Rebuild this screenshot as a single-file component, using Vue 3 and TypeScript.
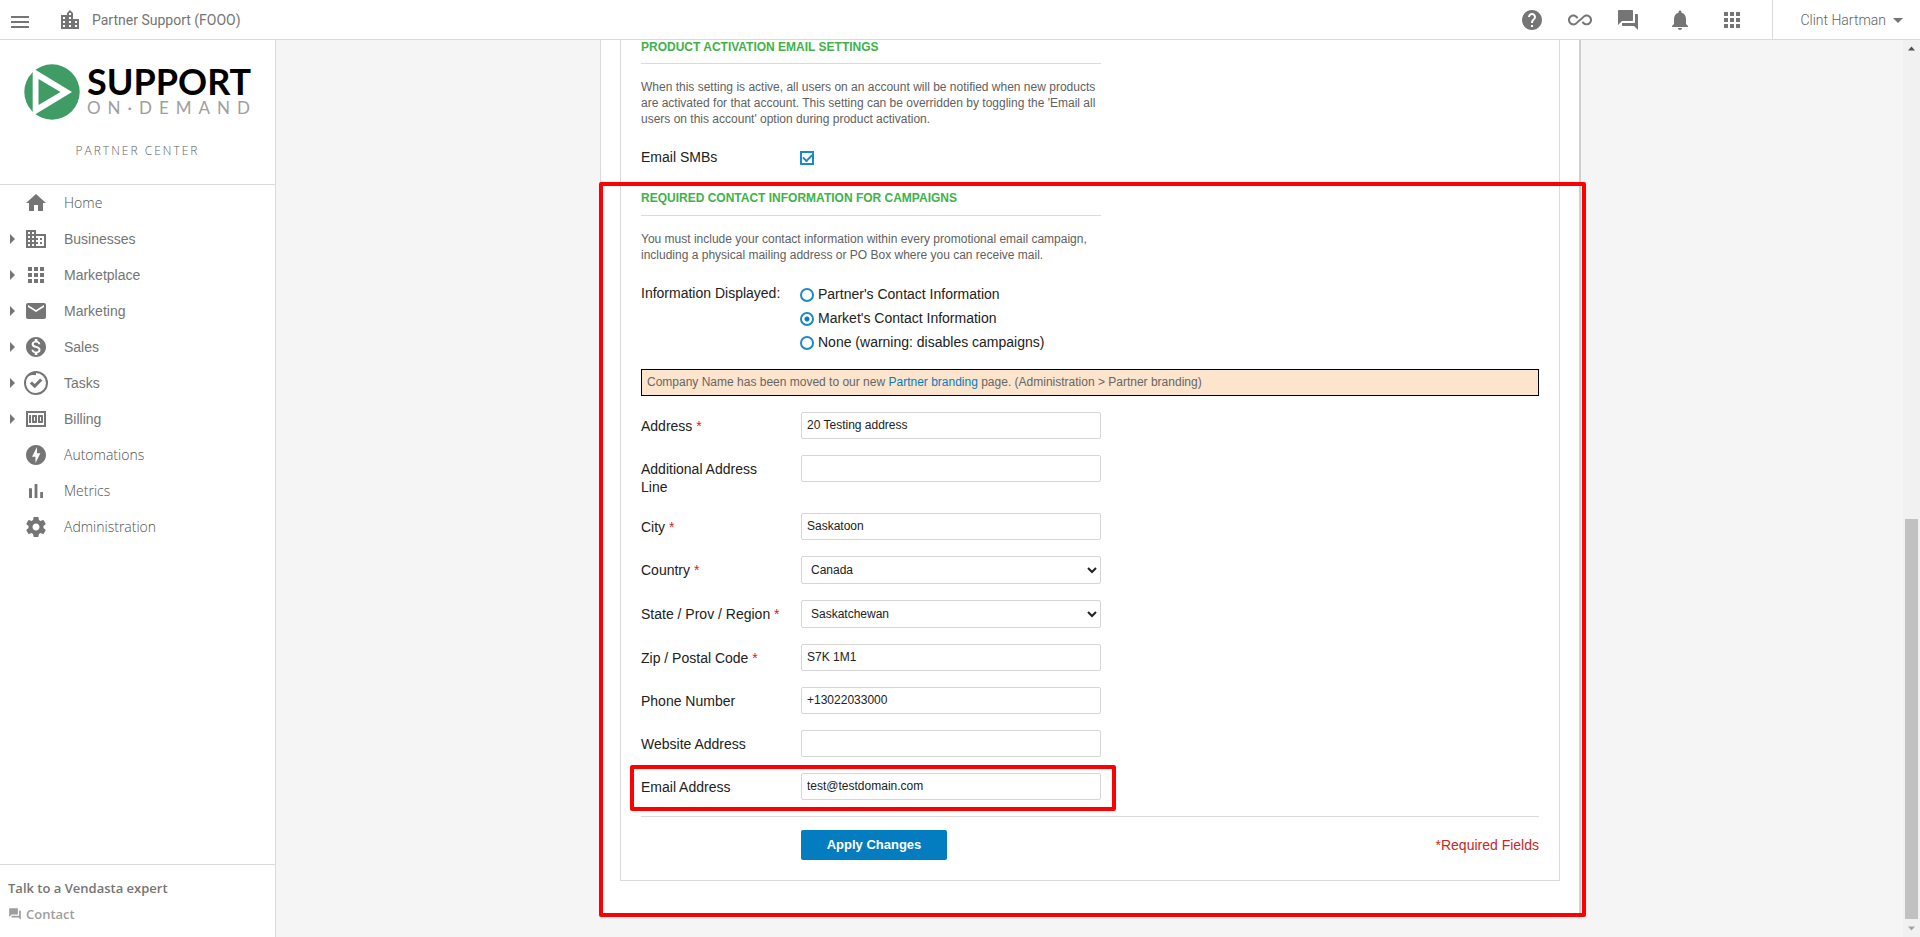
<script setup lang="ts">
import { ref } from 'vue'

interface NavItem {
  label: string
  icon: string
  expandable: boolean
  humanist?: boolean
}

interface Field {
  id: string
  label: string
  required?: boolean
  value: string
  options?: string[]
  highlighted?: boolean
}

const icons: Record<string, string> = {
  home: 'M10 20v-6h4v6h5v-8h3L12 3 2 12h3v8z',
  domain:
    'M12 7V3H2v18h20V7H12zM6 19H4v-2h2v2zm0-4H4v-2h2v2zm0-4H4V9h2v2zm0-4H4V5h2v2zm4 12H8v-2h2v2zm0-4H8v-2h2v2zm0-4H8V9h2v2zm0-4H8V5h2v2zm10 12h-8v-2h2v-2h-2v-2h2v-2h-2V9h8v10zm-2-8h-2v2h2v-2zm0 4h-2v2h2v-2z',
  apps: 'M4 8h4V4H4v4zm6 12h4v-4h-4v4zm-6 0h4v-4H4v4zm0-6h4v-4H4v4zm6 0h4v-4h-4v4zm6-10v4h4V4h-4zm-6 4h4V4h-4v4zm6 6h4v-4h-4v4zm0 6h4v-4h-4v4z',
  mail: 'M20 4H4c-1.1 0-2 .9-2 2v12c0 1.1.9 2 2 2h16c1.1 0 2-.9 2-2V6c0-1.1-.9-2-2-2zm0 4l-8 5-8-5V6l8 5 8-5v2z',
  dollar:
    'M12 2C6.48 2 2 6.48 2 12s4.48 10 10 10 10-4.48 10-10S17.52 2 12 2zm1.41 16.09V20h-2.67v-1.93c-1.71-.36-3.16-1.46-3.27-3.4h1.96c.1 1.05.82 1.87 2.65 1.87 1.96 0 2.4-.98 2.4-1.59 0-.83-.44-1.61-2.67-2.14-2.48-.6-4.18-1.62-4.18-3.67 0-1.72 1.39-2.84 3.11-3.21V4h2.67v1.95c1.86.45 2.79 1.86 2.85 3.39H14.3c-.05-1.11-.64-1.87-2.22-1.87-1.5 0-2.4.68-2.4 1.64 0 .84.65 1.39 2.67 1.91s4.18 1.39 4.18 3.91c-.01 1.83-1.38 2.83-3.12 3.16z',
  tasks:
    'M12 0a12 12 0 1 0 0 24 12 12 0 0 0 0-24zm0 22A10 10 0 0 1 3.800 6.300C6.200 3.600 9 4 12 4.200V2A10 10 0 1 1 12 22zM5.800 12.600l2.200-2.200 2.700 2.600 5.500-5.600 2.200 2.200-7.700 7.600z',
  money:
    'M5 8h2v8H5zm7 0H9c-.55 0-1 .45-1 1v6c0 .55.45 1 1 1h3c.55 0 1-.45 1-1V9c0-.55-.45-1-1-1zm-1 6h-1v-4h1v4zm7-6h-3c-.55 0-1 .45-1 1v6c0 .55.45 1 1 1h3c.55 0 1-.45 1-1V9c0-.55-.45-1-1-1zm-1 6h-1v-4h1v4zM2 4v16h20V4H2zm2 14V6h16v12H4z',
  bolt: 'M12 2.020c-5.510 0-9.980 4.470-9.980 9.980s4.470 9.980 9.980 9.980 9.980-4.470 9.980-9.980S17.510 2.020 12 2.020zM11.480 20v-6.260H8L13 4v6.260h3.350L11.480 20z',
  bars: 'M5 9.200h3V19H5zM10.600 5h2.800v14h-2.800zm5.600 8H19v6h-2.800z',
  gear: 'M19.430 12.980c.04-.32.07-.64.07-.98s-.03-.66-.07-.98l2.110-1.650c.19-.15.24-.42.12-.64l-2-3.460c-.12-.22-.39-.3-.61-.22l-2.490 1c-.52-.4-1.080-.73-1.690-.98l-.38-2.650C14.460 2.180 14.250 2 14 2h-4c-.25 0-.46.18-.49.42l-.38 2.650c-.61.25-1.170.59-1.690.98l-2.490-1c-.23-.09-.49 0-.61.22l-2 3.460c-.13.22-.07.49.12.64l2.110 1.650c-.04.32-.07.65-.07.98s.03.66.07.98l-2.110 1.650c-.19.15-.24.42-.12.64l2 3.460c.12.22.39.3.61.22l2.490-1c.52.4 1.080.73 1.690.98l.38 2.650c.03.24.24.42.49.42h4c.25 0 .46-.18.49-.42l.38-2.650c.61-.25 1.170-.59 1.690-.98l2.490 1c.23.09.49 0 .61-.22l2-3.460c.12-.22.07-.49-.12-.64l-2.110-1.650zM12 15.500c-1.930 0-3.500-1.570-3.500-3.500s1.570-3.500 3.500-3.500 3.500 1.570 3.500 3.500-1.570 3.500-3.500 3.500z',
  menu: 'M3 18h18v-2H3v2zm0-5h18v-2H3v2zm0-7v2h18V6H3z',
  city: 'M15 11V5l-3-3-3 3v2H3v14h18V11h-6zm-8 8H5v-2h2v2zm0-4H5v-2h2v2zm0-4H5V9h2v2zm6 8h-2v-2h2v2zm0-4h-2v-2h2v2zm0-4h-2V9h2v2zm0-4h-2V5h2v2zm6 12h-2v-2h2v2zm0-4h-2v-2h2v2z',
  help: 'M12 2C6.48 2 2 6.48 2 12s4.48 10 10 10 10-4.48 10-10S17.52 2 12 2zm1 17h-2v-2h2v2zm2.070-7.750l-.9.920C13.450 12.900 13 13.500 13 15h-2v-.5c0-1.100.45-2.100 1.170-2.830l1.240-1.260c.37-.36.59-.86.59-1.410 0-1.100-.9-2-2-2s-2 .9-2 2H8c0-2.210 1.790-4 4-4s4 1.790 4 4c0 .88-.36 1.680-.93 2.250z',
  infinity:
    'M18.600 6.620c-1.440 0-2.800.56-3.770 1.530L12 10.660 10.480 12h.01L7.800 14.390c-.64.64-1.490.99-2.400.99-1.870 0-3.390-1.510-3.390-3.380S3.530 8.620 5.400 8.620c.91 0 1.760.35 2.440 1.030l1.130 1 1.510-1.340L9.220 8.200C8.200 7.180 6.840 6.620 5.400 6.620 2.420 6.620 0 9.040 0 12s2.420 5.380 5.400 5.380c1.440 0 2.800-.56 3.770-1.530l2.830-2.500.01.01L13.520 12h-.01l2.690-2.390c.64-.64 1.490-.99 2.400-.99 1.870 0 3.390 1.510 3.390 3.380s-1.520 3.380-3.390 3.380c-.9 0-1.760-.35-2.440-1.030l-1.140-1.010-1.510 1.340 1.270 1.120c1.020 1.010 2.370 1.570 3.820 1.570 2.980 0 5.400-2.410 5.400-5.380s-2.420-5.370-5.400-5.370z',
  forum:
    'M21 6h-2v9H6v2c0 .55.45 1 1 1h11l4 4V7c0-.55-.45-1-1-1zm-4 6V3c0-.55-.45-1-1-1H3c-.55 0-1 .45-1 1v14l4-4h10c.55 0 1-.45 1-1z',
  bell: 'M12 22c1.100 0 2-.9 2-2h-4c0 1.100.89 2 2 2zm6-6v-5c0-3.070-1.640-5.640-4.500-6.320V4c0-.83-.67-1.500-1.500-1.500s-1.500.67-1.500 1.500v.68C7.630 5.360 6 7.920 6 11v5l-2 2v1h16v-1l-2-2z',
  down: 'M7 10l5 5 5-5z',
  right: 'M10 17l5-5-5-5z',
}

const toolbarIcons = [
  { name: 'help', title: 'Help' },
  { name: 'infinity', title: 'Integrations' },
  { name: 'forum', title: 'Conversations' },
  { name: 'bell', title: 'Notifications' },
  { name: 'apps', title: 'Apps' },
]

const navItems: NavItem[] = [
  { label: 'Home', icon: 'home', expandable: false, humanist: true },
  { label: 'Businesses', icon: 'domain', expandable: true },
  { label: 'Marketplace', icon: 'apps', expandable: true },
  { label: 'Marketing', icon: 'mail', expandable: true },
  { label: 'Sales', icon: 'dollar', expandable: true },
  { label: 'Tasks', icon: 'tasks', expandable: true },
  { label: 'Billing', icon: 'money', expandable: true },
  { label: 'Automations', icon: 'bolt', expandable: false, humanist: true },
  { label: 'Metrics', icon: 'bars', expandable: false, humanist: true },
  { label: 'Administration', icon: 'gear', expandable: false, humanist: true },
]

const contactOptions = [
  { value: 'partner', label: "Partner's Contact Information" },
  { value: 'market', label: "Market's Contact Information" },
  { value: 'none', label: 'None (warning: disables campaigns)' },
]

const emailSmbs = ref(true)
const displayed = ref('market')

const fields = ref<Field[]>([
  { id: 'address', label: 'Address', required: true, value: '20 Testing address' },
  { id: 'address2', label: 'Additional Address Line', value: '' },
  { id: 'city', label: 'City', required: true, value: 'Saskatoon' },
  { id: 'country', label: 'Country', required: true, value: 'Canada', options: ['Canada'] },
  { id: 'state', label: 'State / Prov / Region', required: true, value: 'Saskatchewan', options: ['Saskatchewan'] },
  { id: 'zip', label: 'Zip / Postal Code', required: true, value: 'S7K 1M1' },
  { id: 'phone', label: 'Phone Number', value: '+13022033000' },
  { id: 'website', label: 'Website Address', value: '' },
  { id: 'email', label: 'Email Address', value: 'test@testdomain.com', highlighted: true },
])
</script>

<template>
  <div class="page">
    <header class="topbar">
      <button class="icon-button menu-button" type="button" aria-label="Menu">
        <svg class="icon" viewBox="0 0 24 24"><path :d="icons.menu" /></svg>
      </button>
      <svg class="icon city-icon" viewBox="0 0 24 24"><path :d="icons.city" /></svg>
      <span class="partner-name">Partner Support (FOOO)</span>
      <div class="tools">
        <button v-for="t in toolbarIcons" :key="t.name" class="icon-button" type="button" :aria-label="t.title">
          <svg class="icon" viewBox="0 0 24 24"><path :d="icons[t.name]" /></svg>
        </button>
      </div>
      <button class="user" type="button">
        <span>Clint Hartman</span>
        <svg class="icon" viewBox="0 0 24 24"><path :d="icons.down" /></svg>
      </button>
    </header>

    <div class="body">
      <aside class="sidebar">
        <div class="brand">
          <div class="logo">
            <svg class="logo-mark" viewBox="0 0 56 56">
              <circle cx="28" cy="28" r="27.700" fill="#3f9c65" />
              <path d="M8.700 5.500H11L48 28 11 50.500H8.700z" fill="#fff" />
              <path d="M14.500 15 36.500 28 14.500 41z" fill="#3f9c65" />
            </svg>
            <div class="logo-text">
              <span class="logo-main">SUPPORT</span>
              <span class="logo-sub">ON·DEMAND</span>
            </div>
          </div>
          <div class="center-label">PARTNER CENTER</div>
        </div>
        <nav class="nav">
          <a v-for="n in navItems" :key="n.label" href="#" class="nav-item" :class="{ humanist: n.humanist }">
            <span class="expander">
              <svg v-if="n.expandable" class="icon" viewBox="0 0 24 24"><path :d="icons.right" /></svg>
            </span>
            <svg class="icon" viewBox="0 0 24 24"><path fill-rule="evenodd" :d="icons[n.icon]" /></svg>
            <span class="nav-label">{{ n.label }}</span>
          </a>
        </nav>
        <div class="expert">
          <div class="expert-title">Talk to a Vendasta expert</div>
          <a href="#" class="contact">
            <svg class="contact-icon" viewBox="0 0 24 24"><path :d="icons.forum" /></svg>
            <span>Contact</span>
          </a>
        </div>
      </aside>

      <main class="content">
        <form class="card" @submit.prevent>
          <div class="panel">
            <section class="narrow">
              <h2>PRODUCT ACTIVATION EMAIL SETTINGS</h2>
              <p class="hint">
                When this setting is active, all users on an account will be notified when new products are activated
                for that account. This setting can be overridden by toggling the 'Email all users on this account'
                option during product activation.
              </p>
              <div class="setting">
                <label class="caption" for="email-smbs">Email SMBs</label>
                <input id="email-smbs" v-model="emailSmbs" class="check" type="checkbox" />
              </div>
            </section>

            <section class="narrow second">
              <h2>REQUIRED CONTACT INFORMATION FOR CAMPAIGNS</h2>
              <p class="hint">
                You must include your contact information within every promotional email campaign, including a physical
                mailing address or PO Box where you can receive mail.
              </p>
              <div class="setting">
                <span id="displayed-caption" class="caption">Information Displayed:</span>
                <div class="options" role="radiogroup" aria-labelledby="displayed-caption">
                  <label v-for="o in contactOptions" :key="o.value" class="option">
                    <input v-model="displayed" class="radio" type="radio" name="displayed" :value="o.value" />
                    <span>{{ o.label }}</span>
                  </label>
                </div>
              </div>
            </section>

            <div class="notice">
              Company Name has been moved to our new <a href="#">Partner branding</a> page. (Administration &gt; Partner
              branding)
            </div>

            <div class="fields">
              <div v-for="f in fields" :key="f.id" class="field">
                <label class="field-label" :for="f.id"
                  >{{ f.label }} <span v-if="f.required" class="star">*</span></label
                >
                <select v-if="f.options" :id="f.id" v-model="f.value" class="control select">
                  <option v-for="o in f.options" :key="o">{{ o }}</option>
                </select>
                <input v-else :id="f.id" v-model="f.value" class="control" type="text" />
                <span v-if="f.highlighted" class="mark row-mark"></span>
              </div>
            </div>

            <div class="actions">
              <button class="apply" type="submit">Apply Changes</button>
              <span class="required">*Required Fields</span>
            </div>
          </div>
          <span class="mark section-mark"></span>
        </form>
      </main>

      <div class="scrollbar">
        <svg class="scroll-arrow" viewBox="0 0 17 17"><path d="M5 10.500h7L8.500 6.500z" fill="#505050" /></svg>
        <div class="scroll-track"><div class="scroll-thumb"></div></div>
        <svg class="scroll-arrow" viewBox="0 0 17 17"><path d="M5 6.500h7L8.500 10.500z" fill="#a3a3a3" /></svg>
      </div>
    </div>
  </div>
</template>

<style>
html,
body {
  margin: 0;
  background: #f5f5f5;
}
</style>

<style scoped>
.page {
  display: flex;
  flex-direction: column;
  height: 100vh;
  overflow: hidden;
  background: #f5f5f5;
  font-family: 'Liberation Sans', Arial, sans-serif;
  font-size: 14px;
  line-height: 18px;
  color: #212121;
}
.page * {
  box-sizing: border-box;
}
a {
  text-decoration: none;
}
.icon {
  display: block;
  flex: none;
  width: 24px;
  height: 24px;
  fill: #757575;
}
.icon-button {
  padding: 0;
  border: 0;
  background: none;
  cursor: pointer;
}

/* Top bar */
.topbar {
  display: flex;
  flex: none;
  align-items: center;
  height: 40px;
  padding-left: 8px;
  border-bottom: 1px solid #dadada;
  background: #fff;
  font-family: Roboto, sans-serif;
  color: #757575;
}
.menu-button {
  padding-top: 4px;
}
.city-icon {
  margin-left: 26px;
}
.partner-name {
  margin-left: 10px;
}
.tools {
  display: flex;
  gap: 24px;
  margin-left: auto;
  margin-right: 28px;
}
.tools .icon-button:nth-child(n + 4) {
  margin-left: 4px;
}
.user {
  display: flex;
  align-items: center;
  align-self: stretch;
  padding: 0 10px 0 27px;
  border: 0;
  border-left: 1px solid #dadada;
  background: none;
  font: 300 14px/18px Roboto, sans-serif;
  color: #616161;
  cursor: pointer;
}

.body {
  display: flex;
  flex: 1;
  min-height: 0;
}

/* Sidebar */
.sidebar {
  display: flex;
  flex: none;
  flex-direction: column;
  width: 276px;
  border-right: 1px solid #dadada;
  background: #fff;
}
.brand {
  height: 145px;
  padding-top: 24px;
  border-bottom: 1px solid #dadada;
}
.logo {
  display: flex;
  gap: 7px;
  padding-left: 24px;
}
.logo-mark {
  width: 56px;
  height: 56px;
}
.logo-text {
  display: flex;
  flex-direction: column;
  font-family: Lato, sans-serif;
}
.logo-main {
  font-size: 36px;
  font-weight: 700;
  line-height: 34px;
  color: #000;
}
.logo-sub {
  font-size: 17px;
  line-height: 20px;
  letter-spacing: 7px;
  color: #9e9e9e;
}
.center-label {
  margin-top: 22px;
  font-family: 'Open Sans', sans-serif;
  font-size: 12px;
  font-weight: 300;
  line-height: 18px;
  letter-spacing: 2px;
  text-align: center;
  color: #616161;
}
.nav {
  flex: 1;
}
.nav-item {
  display: flex;
  align-items: center;
  height: 36px;
  color: #757575;
}
.nav-item.humanist {
  font-family: 'Open Sans', sans-serif;
  font-weight: 300;
  color: #505050;
}
.expander {
  width: 24px;
}
.nav-label {
  margin-left: 16px;
}
.expert {
  height: 73px;
  padding: 14px 8px 0;
  border-top: 1px solid #dadada;
  font-family: 'Open Sans', sans-serif;
  font-size: 13px;
  font-weight: 600;
  color: #757575;
}
.contact {
  display: flex;
  align-items: center;
  gap: 4px;
  margin-top: 8px;
  color: #9e9e9e;
}
.contact-icon {
  width: 14px;
  height: 14px;
  fill: #9e9e9e;
}

/* Settings card */
.content {
  flex: 1;
  min-width: 0;
  overflow: hidden;
}
.card {
  position: relative;
  max-width: 979px;
  margin: 0 auto;
  padding: 0 19px 36px;
  border-left: 1px solid #dadada;
  background: #fff;
  box-shadow: 2px 0 0 #cfcfcf;
}
.panel {
  padding: 0 20px 20px;
  border: 1px solid #dadada;
  border-top: 0;
}
.narrow {
  max-width: 460px;
}
.narrow + .notice {
  margin-top: 12px;
}
h2 {
  margin: 0 0 15px;
  padding-bottom: 9px;
  border-bottom: 1px solid #dadada;
  font-size: 12px;
  font-weight: 700;
  line-height: 14px;
  color: #40b24a;
}
.second {
  margin-top: 25px;
}
.second h2 {
  padding-bottom: 10px;
}
.hint {
  margin: 0 0 21px;
  font-size: 12px;
  line-height: 16px;
  color: #616161;
}
.setting {
  display: flex;
}
.caption {
  flex: none;
  width: 159px;
}
.check,
.radio {
  flex: none;
  appearance: none;
  width: 14px;
  height: 14px;
  margin: 3px 0 0;
  border: 2px solid #1a8ac8;
  background: #fff;
}
.check {
  display: grid;
  place-items: center;
}
.check:checked::before {
  content: '';
  width: 7px;
  height: 4px;
  margin-top: -3px;
  border-left: 2px solid #1a8ac8;
  border-bottom: 2px solid #1a8ac8;
  transform: rotate(-45deg);
}
.radio {
  border-radius: 50%;
}
.radio:checked {
  background: radial-gradient(circle, #047dc0 0 2px, #fff 3px);
}
.options {
  padding-top: 1px;
}
.option {
  display: flex;
  gap: 4px;
  height: 24px;
}
.notice {
  padding: 4px 5px 5px;
  border: 1px solid #000;
  background: #fde4cc;
  font-size: 12px;
  line-height: 16px;
  color: #666;
}
.notice a {
  color: #047dc0;
}
.fields {
  display: flex;
  flex-direction: column;
  gap: 16px;
  margin: 16px 0;
}
.field {
  position: relative;
  display: flex;
  align-items: flex-start;
}
.field-label {
  width: 160px;
  padding: 5px 16px 1px 0;
}
.star,
.required {
  color: #c62828;
}
.control {
  width: 300px;
  height: 27px;
  padding: 0 5px 1px;
  border: 1px solid #d6d6d6;
  border-radius: 2px;
  background: #fff;
  font: 12px/16px 'Liberation Sans', Arial, sans-serif;
  color: #212121;
}
.select {
  height: 28px;
}
.actions {
  display: flex;
  align-items: center;
  padding-top: 13px;
  border-top: 1px solid #dadada;
}
.apply {
  width: 146px;
  height: 30px;
  margin-left: 160px;
  border: 0;
  border-radius: 2px;
  background: #047dc0;
  font: 700 13px/18px 'Liberation Sans', Arial, sans-serif;
  color: #fff;
  cursor: pointer;
}
.required {
  margin-left: auto;
}

/* Callout outlines */
.mark {
  position: absolute;
  border: 4px solid #f00;
  border-radius: 2px;
  pointer-events: none;
}
.section-mark {
  top: 142px;
  right: -7px;
  bottom: 0;
  left: -2px;
}
.row-mark {
  top: -8px;
  bottom: -11px;
  left: -11px;
  width: 486px;
}

/* Scrollbar */
.scrollbar {
  display: flex;
  flex: none;
  flex-direction: column;
  width: 17px;
  background: #f1f1f1;
}
.scroll-arrow {
  width: 17px;
  height: 17px;
}
.scroll-track {
  display: grid;
  flex: 1;
  grid-template-rows: 463fr 400fr;
  padding: 0 2px 1px;
}
.scroll-thumb {
  grid-row: 2;
  background: #c1c1c1;
}
</style>
